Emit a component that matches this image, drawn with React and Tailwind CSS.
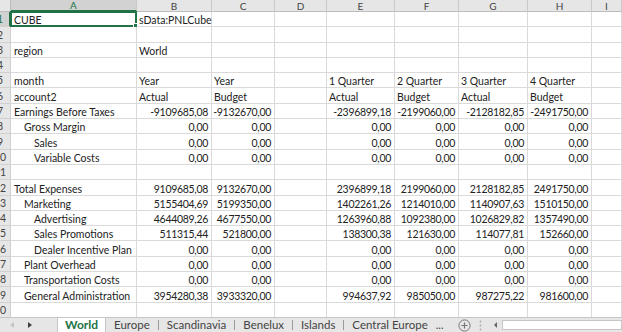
import React from "react";

const F = { fontFamily: "Lato, 'Noto Sans', sans-serif" };

const z = "0,00";
const data = [
  { a: "CUBE", cells: ["sData:PNLCube", "", "", "", "", "", ""], text: true },
  { a: "", cells: [] },
  { a: "region", cells: ["World"], text: true },
  { a: "", cells: [] },
  { a: "month", cells: ["Year", "Year", "", "1 Quarter", "2 Quarter", "3 Quarter", "4 Quarter"], text: true },
  { a: "account2", cells: ["Actual", "Budget", "", "Actual", "Budget", "Actual", "Budget"], text: true },
  { a: "Earnings Before Taxes", i: 0, cells: ["-9109685,08", "-9132670,00", "", "-2396899,18", "-2199060,00", "-2128182,85", "-2491750,00"] },
  { a: "Gross Margin", i: 1, cells: [z, z, "", z, z, z, z] },
  { a: "Sales", i: 2, cells: [z, z, "", z, z, z, z] },
  { a: "Variable Costs", i: 2, cells: [z, z, "", z, z, z, z] },
  { a: "", cells: [] },
  { a: "Total Expenses", i: 0, cells: ["9109685,08", "9132670,00", "", "2396899,18", "2199060,00", "2128182,85", "2491750,00"] },
  { a: "Marketing", i: 1, cells: ["5155404,69", "5199350,00", "", "1402261,26", "1214010,00", "1140907,63", "1510150,00"] },
  { a: "Advertising", i: 2, cells: ["4644089,26", "4677550,00", "", "1263960,88", "1092380,00", "1026829,82", "1357490,00"] },
  { a: "Sales Promotions", i: 2, cells: ["511315,44", "521800,00", "", "138300,38", "121630,00", "114077,81", "152660,00"] },
  { a: "Dealer Incentive Plan", i: 2, cells: [z, z, "", z, z, z, z] },
  { a: "Plant Overhead", i: 1, cells: [z, z, "", z, z, z, z] },
  { a: "Transportation Costs", i: 1, cells: [z, z, "", z, z, z, z] },
  { a: "General Administration", i: 1, cells: ["3954280,38", "3933320,00", "", "994637,92", "985050,00", "987275,22", "981600,00"] },
  { a: "", cells: [] },
];

const cols = ["A", "B", "C", "D", "E", "F", "G", "H", "I"];
const indent = ["pl-[3px]", "pl-[13px]", "pl-[23px]"];

function Tab({ label, active, sep = true }) {
  if (active)
    return (
      <div className="h-full px-[7px] flex items-center bg-white border-x border-[#c6c6c6] text-[#217346] font-bold text-[12px]">
        {label}
      </div>
    );
  return (
    <div className="h-full flex items-center">
      <span className="px-[8px] text-[#444] text-[11.5px]">{label}</span>
      {sep && <span className="w-px h-[10px] bg-[#9a9a9a]" />}
    </div>
  );
}

export default function App() {
  return (
    <div className="w-[622px] h-[332px] overflow-hidden bg-white flex flex-col text-[#222]" style={F}>
      <div className="h-[317px] overflow-hidden">
        <div className="grid grid-cols-[11px_126px_75px_63px_52px_68px_64px_69px_64px_30px] grid-rows-[12px_repeat(20,15.3px)] w-[622px]">
          <div className="bg-[#e6e6e6] border-r border-b border-[#bdbdbd]" />
          {cols.map((c, k) => (
            <div
              key={c}
              className={
                "flex items-center justify-center text-[10px] leading-none border-r border-[#c9c9c9] " +
                (k === 0
                  ? "bg-[#d2d2d2] text-[#217346] border-b-2 border-b-[#217346]"
                  : "bg-[#e6e6e6] text-[#444] border-b border-b-[#bdbdbd]")
              }
            >
              {c}
            </div>
          ))}
          {data.map((r, ri) => {
            const n = ri + 1;
            const cells = [...r.cells];
            while (cells.length < 8) cells.push("");
            return (
              <React.Fragment key={ri}>
                <div
                  className={
                    "overflow-hidden flex items-end pb-[1px] text-[10.5px] leading-[12px] border-r border-b border-[#d0d0d0] " +
                    (n === 1 ? "bg-[#d2d2d2] text-[#217346] border-r-[#217346] border-r-2" : "bg-[#e6e6e6] text-[#444]")
                  }
                >
                  <div className="w-[22px] -ml-[11px] shrink-0 flex justify-center whitespace-nowrap">{n}</div>
                </div>
                <div
                  className={
                    "relative flex items-end text-[10.5px] leading-[12px] whitespace-nowrap border-r border-b border-[#dadada] " +
                    indent[r.i || 0]
                  }
                >
                  {r.a}
                  {n === 1 && (
                    <div className="absolute -left-[1px] -top-[1px] -right-[1px] -bottom-[1px] border-2 border-[#217346]">
                      <div className="absolute -right-[3px] -bottom-[3px] w-[5px] h-[5px] bg-[#217346] border border-white" />
                    </div>
                  )}
                </div>
                {cells.map((v, ci) => (
                  <div
                    key={ci}
                    className={
                      "flex items-end text-[10.5px] leading-[12px] whitespace-nowrap border-r border-b border-[#dadada] " +
                      (r.text ? "justify-start pl-[2px] overflow-visible" : "justify-end pr-[3px] tracking-[-0.3px]")
                    }
                  >
                    {v}
                  </div>
                ))}
              </React.Fragment>
            );
          })}
        </div>
      </div>
      <div className="h-[15px] bg-[#e6e6e6] border-t border-[#c6c6c6] flex items-stretch">
        <div className="w-[57px] flex items-center">
          <svg width="4" height="6" viewBox="0 0 4 6" className="ml-[10px]">
            <path d="M4 0 L0 3 L4 6 Z" fill="#c4c4c4" />
          </svg>
          <svg width="4" height="6" viewBox="0 0 4 6" className="ml-[14px]">
            <path d="M0 0 L4 3 L0 6 Z" fill="#404040" />
          </svg>
        </div>
        <Tab label="World" active />
        <Tab label="Europe" />
        <Tab label="Scandinavia" />
        <Tab label="Benelux" />
        <Tab label="Islands" />
        <Tab label="Central Europe" sep={false} />
        <span className="flex items-center text-[#444] text-[11px]">...</span>
        <div className="flex items-center ml-[14px]">
          <svg width="13" height="13" viewBox="0 0 13 13">
            <circle cx="6.5" cy="6.5" r="5.6" fill="none" stroke="#777" strokeWidth="1" />
            <path d="M6.5 3.5 V9.5 M3.5 6.5 H9.5" stroke="#777" strokeWidth="1.2" />
          </svg>
        </div>
        <div className="flex items-center ml-[8px]">
          <svg width="3" height="11" viewBox="0 0 3 11">
            <circle cx="1.5" cy="1.5" r="0.9" fill="#aaa" />
            <circle cx="1.5" cy="5.5" r="0.9" fill="#aaa" />
            <circle cx="1.5" cy="9.5" r="0.9" fill="#aaa" />
          </svg>
        </div>
        <div className="flex items-center ml-[12px]">
          <svg width="4" height="6" viewBox="0 0 4 6">
            <path d="M3 0 L0 3 L3 6 Z" fill="#666" />
          </svg>
        </div>
        <div className="flex-1 ml-[4px] my-[2px] bg-white border border-[#c6c6c6]" />
      </div>
    </div>
  );
}
